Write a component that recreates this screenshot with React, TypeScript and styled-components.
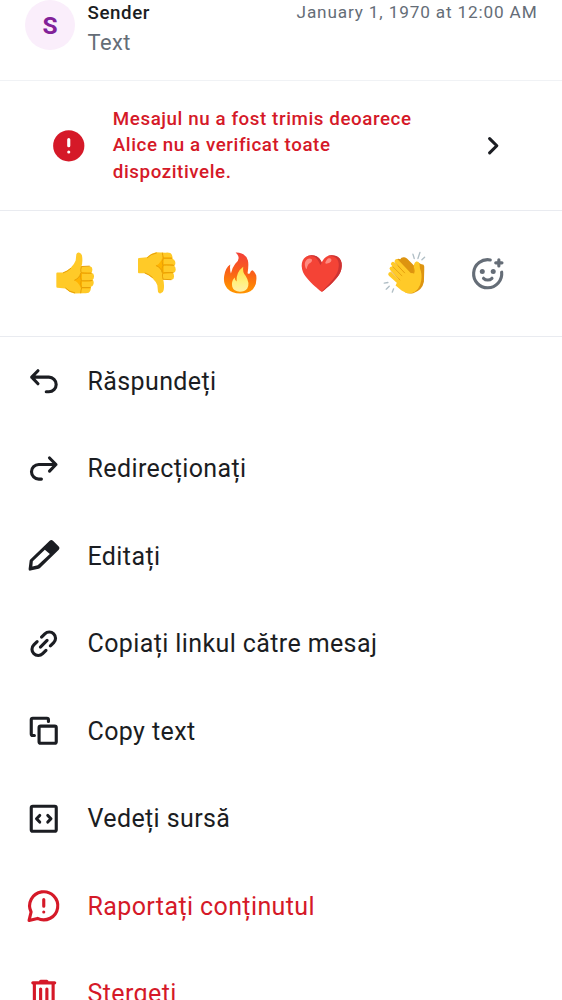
import React from "react";
import styled, { createGlobalStyle } from "styled-components";

const Global = createGlobalStyle`
  *, *::before, *::after { box-sizing: border-box; }
  html, body { margin: 0; padding: 0; background: #fff; }
  body { height: 1000px; overflow: hidden; font-family: Roboto, "Noto Sans", sans-serif; color: #1b1d22; }
`;

const Sheet = styled.main`
  display: flex;
  flex-direction: column;
  width: 562px;
  height: 1000px;
  overflow: hidden;
  background: #fff;
`;

const Header = styled.header`
  display: flex;
  flex: none;
  height: 81px;
  padding: 0 24.5px 0 25px;
  border-bottom: 1.5px solid #f0f2f5;
`;

const Avatar = styled.div`
  flex: none;
  width: 50px;
  height: 50px;
  border-radius: 50%;
  background: #faeefb;
  color: #822198;
  font-size: 24.5px;
  font-weight: 700;
  line-height: 51px;
  text-align: center;
`;

const Summary = styled.div`
  flex: 1;
  padding-left: 12.5px;
`;

const Sender = styled.div`
  font-size: 18.75px;
  font-weight: 500;
  line-height: 26px;
  letter-spacing: 0.57px;
`;

const Preview = styled.div`
  margin-top: 1px;
  font-size: 21.9px;
  line-height: 31px;
  letter-spacing: 0.39px;
  color: #656d77;
`;

const Timestamp = styled.time`
  font-size: 17.2px;
  line-height: 24px;
  letter-spacing: 0.84px;
  color: #656d77;
`;

const Warning = styled.section`
  display: flex;
  flex: none;
  align-items: center;
  height: 130px;
  padding: 0 51px 0 50px;
  border-bottom: 1.5px solid #e9ebf0;
  color: #d51928;
`;

const WarningText = styled.p`
  flex: 1;
  margin: 0.5px 0 0 25.3px;
  font-size: 18.75px;
  font-weight: 500;
  line-height: 26.6px;
  letter-spacing: 0.58px;
`;

const Reactions = styled.section`
  display: grid;
  flex: none;
  grid-template-columns: repeat(6, 82.5px);
  justify-content: center;
  align-items: center;
  height: 126px;
  border-bottom: 1.5px solid #e9ebf0;
  color: #656d77;
`;

const Emoji = styled.span`
  font-family: "Noto Color Emoji", sans-serif;
  font-size: 36.5px;
  line-height: 44px;
  text-align: center;
`;

const Reaction = styled.span`
  display: flex;
  justify-content: center;
`;

const EmojiDrawing = styled.svg`
  display: block;
  width: 42px;
  height: 42px;
  margin-bottom: 1.5px;
  overflow: visible;
`;

const Actions = styled.ul`
  margin: 0;
  padding: 0;
  list-style: none;
`;

const Action = styled.li<{ $critical?: boolean }>`
  display: flex;
  align-items: center;
  gap: 25px;
  height: 87.5px;
  padding: 0 25px;
  font-size: 25px;
  letter-spacing: 0.39px;
  color: ${(p) => (p.$critical ? "#d51928" : "#1b1d22")};
`;

const Label = styled.span`
  padding-top: 1px;
`;

const Glyph = styled.svg`
  display: block;
  flex: none;
  width: 37.5px;
  height: 37.5px;
  fill: currentColor;
`;

const line = {
  fill: "none",
  stroke: "currentColor",
  strokeWidth: 2,
  strokeLinecap: "round" as const,
  strokeLinejoin: "round" as const,
};

const icons: Record<string, React.ReactNode> = {
  reply: <path {...line} d="M8.3 5.6 4.3 9.7l4 4.2M4.3 9.7h11a4.65 4.65 0 0 1 0 9.3h-1.7" />,
  forward: <path {...line} d="M15.7 5.1 19.8 9.3l-4.1 4.2M19.8 9.3h-11a4.65 4.65 0 0 0 0 9.3h1.7" />,
  edit: (
    <path
      fillRule="evenodd"
      d="M3.2 14.5 15.8 2.4q1.1-.9 2.1 0l3.7 3.7q1 1 0 2L9.6 19.8q-.4.4-.9.5l-5.2 1.2q-1.3.2-1.2-1L3 15.1q0-.3.2-.6M12.7 8.1l-7.7 7.4-.3 3.4 3.4-.8 7.8-7.3z"
    />
  ),
  link: (
    <path d="M12 19.071a4.9 4.9 0 0 1-3.536 1.467 4.9 4.9 0 0 1-3.535-1.467 4.9 4.9 0 0 1-1.467-3.535q0-2.067 1.467-3.536L7.05 9.879q.3-.3.707-.3t.707.3.301.707-.3.707l-2.122 2.121a2.9 2.9 0 0 0-.884 2.122q0 1.237.884 2.12.884.885 2.121.885t2.122-.884l2.121-2.121q.3-.3.707-.3t.707.3.3.707-.3.707zm-1.414-4.243q-.3.3-.707.3t-.707-.3-.301-.707.3-.707l4.243-4.242q.3-.3.707-.3t.707.3.3.707-.3.707zm6.364-.707q-.3.3-.707.3t-.707-.3-.301-.707.3-.707l2.122-2.121q.884-.885.884-2.121 0-1.238-.884-2.122a2.9 2.9 0 0 0-2.121-.884q-1.237 0-2.122.884l-2.121 2.122q-.3.3-.707.3t-.707-.3-.3-.707.3-.708L12 4.93q1.467-1.467 3.536-1.467t3.535 1.467 1.467 3.535T19.071 12z" />
  ),
  copy: (
    <g {...line}>
      <rect x="9" y="9" width="11" height="11" rx="1" />
      <path d="M15 6V5q0-1-1-1H5Q4 4 4 5v9q0 1 1 1h1" />
    </g>
  ),
  source: (
    <g {...line}>
      <rect x="4" y="4" width="16" height="16" rx="1" />
      <path d="M9.4 9.9 7.4 12l2 2.1M14.6 9.9l2 2.1-2 2.1" />
    </g>
  ),
  report: (
    <g {...line}>
      <path d="M8 20.1A9 9 0 1 0 3.9 16L2.6 21.4z" />
      <path d="M12 8v4.3M12 16v.01" />
    </g>
  ),
  remove: (
    <path d="M7 21q-.824 0-1.412-.587A1.93 1.93 0 0 1 5 19V6a.97.97 0 0 1-.713-.287A.97.97 0 0 1 4 5q0-.424.287-.713A.97.97 0 0 1 5 4h4q0-.424.287-.712A.97.97 0 0 1 10 3h4q.424 0 .713.288Q15 3.575 15 4h4q.424 0 .712.287Q20 4.576 20 5t-.288.713A.97.97 0 0 1 19 6v13q0 .824-.587 1.413A1.93 1.93 0 0 1 17 21zM7 6v13h10V6zm2 10q0 .424.287.712Q9.576 17 10 17t.713-.288A.97.97 0 0 0 11 16V9a.97.97 0 0 0-.287-.713A.97.97 0 0 0 10 8a.97.97 0 0 0-.713.287A.97.97 0 0 0 9 9zm4 0q0 .424.287.712.288.288.713.288.424 0 .713-.288A.97.97 0 0 0 15 16V9a.97.97 0 0 0-.287-.713A.97.97 0 0 0 14 8a.97.97 0 0 0-.713.287A.97.97 0 0 0 13 9z" />
  ),
  error: (
    <>
      <circle cx="12" cy="12" r="10" />
      <path {...line} stroke="#fff" d="M12 8v4M12 16v.01" />
    </>
  ),
  chevron: <path {...line} stroke="#1b1d22" d="m10 7.4 4.6 4.6-4.6 4.6" />,
  addReaction: (
    <>
      <path {...line} d="M13.6 3.15A9 9 0 1 0 20.9 11" />
      <path {...line} d="M19.1 3v4M17.1 5h4M9.3 14.9q1.1 1.1 2.7 1.1t2.7-1.1" />
      <circle cx="8.5" cy="10.5" r="1.6" />
      <circle cx="15.5" cy="10.5" r="1.6" />
    </>
  ),
};

const Icon = ({ name }: { name: string }) => (
  <Glyph viewBox="0 0 24 24" aria-hidden="true">
    {icons[name]}
  </Glyph>
);

const Thumb = ({ down }: { down?: boolean }) => (
  <EmojiDrawing viewBox="101 142.5 126 126" role="img">
    <g transform={down ? "translate(-1 410.5) scale(1 -1)" : undefined}>
      <path
        fill="#ffca28"
        d="M108 207q0-3 3-3h17q12-5 22-13 12-11 16-23l2-19q2-6 8-5 8 2 9 10 3 18-2 33l26-2q8 1 7 11 0 6-3 9 9 2 8 11 0 7-4 10 5 6 2 14-2 6-7 7 0 13-7 18-5 2-15 1l-28 1q-17-4-27-15l-24-2q-3 0-3-4z"
      />
      <path fill="#ffb300" d="M162 227q15-8 21-24l30 2-3 3h-25v20h30l-3 3h-27v18h27l-4 3h-24l1 14q-4-30-23-39" />
      <path
        fill="none"
        stroke="#e8a008"
        strokeWidth="3"
        strokeLinecap="round"
        d="M183 187q-3 9-1 17 4 3 31 2M163 227q15-6 18-21-2 16 2 22 5 2 32 0M182 229q-4 12 2 20h25M184 250q-3 8-3 15M136 251q9 11 27 14M184 186l23-1M129 205q12-4 22-13"
      />
    </g>
  </EmojiDrawing>
);

const Fire = () => (
  <EmojiDrawing viewBox="596.25 142.5 126 126" role="img">
    <defs>
      <linearGradient id="flame" x1="0.55" y1="0" x2="0.45" y2="1">
        <stop offset="0.05" stopColor="#f44336" />
        <stop offset="0.5" stopColor="#fa6217" />
        <stop offset="0.9" stopColor="#ff9100" />
      </linearGradient>
      <linearGradient id="core" x1="0" y1="0" x2="0" y2="1">
        <stop offset="0.1" stopColor="#ffe14d" />
        <stop offset="0.6" stopColor="#fff17e" />
        <stop offset="1" stopColor="#fff0a8" />
      </linearGradient>
    </defs>
    <path
      fill="url(#flame)"
      d="M646 144q29-1 37 24 3 12-1 38 6 5 8-2 1-6 7-7 6 4 11 16 3 27-10 41-14 13-38 13-25 0-39-15-13-15-9-39 4-24 18-33-2 15 2 27 3-16 13-29 20-17 1-34"
    />
    <path
      fill="url(#core)"
      d="M669 187q-3 16 7 27 14 22 5 38-8 10-22 10-19-1-23-15-4-15 7-28 2 11 6 12-2-28 20-44"
    />
  </EmojiDrawing>
);

const Clap = () => (
  <EmojiDrawing viewBox="41.25 37.5 126 126" role="img">
    <path
      fill="#dd9410"
      d="M78 62q5-7 12-3 3-7 12-6 5 0 9 5l20 20 14-8q6 5 15 6 3 4 2 13l-1 38q-5 26-32 34-15 3-24-3z"
    />
    <g fill="none" stroke="#ffca28" strokeWidth="12" strokeLinecap="round">
      <path d="m79 65 38 40M68 73l42 43M64 87l40 40M60 104l42 38" />
    </g>
    <path
      fill="#ffca28"
      d="m107 100 24 1q3-4 0-14-2-17 7-21 9-1 10 9l1 12q7 15 4 36-5 32-30 38-15 2-29-8l-18-15 14-30z"
    />
    <g fill="none" stroke="#e59c0c" strokeWidth="2.5" strokeLinecap="round">
      <path d="m75 70 28 30M67 81l28 28M62 96l27 25M131 101q2-6 0-14" />
    </g>
    <g fill="none" stroke="#b0bec5" strokeWidth="4" strokeLinecap="round">
      <path d="m128 44 4 13M149 39l-6 18M163 53l-8 8M42 131l11-2M48 149l9-9M70 148l-4 10" />
    </g>
  </EmojiDrawing>
);

const actions = [
  { icon: "reply", label: "Răspundeți" },
  { icon: "forward", label: "Redirecționați" },
  { icon: "edit", label: "Editați" },
  { icon: "link", label: "Copiați linkul către mesaj" },
  { icon: "copy", label: "Copy text" },
  { icon: "source", label: "Vedeți sursă" },
  { icon: "report", label: "Raportați conținutul", critical: true },
  { icon: "remove", label: "Ștergeți", critical: true },
];

export default function App() {
  return (
    <>
      <Global />
      <Sheet>
        <Header>
          <Avatar>S</Avatar>
          <Summary>
            <Sender>Sender</Sender>
            <Preview>Text</Preview>
          </Summary>
          <Timestamp>January 1, 1970 at 12:00 AM</Timestamp>
        </Header>
        <Warning>
          <Icon name="error" />
          <WarningText>
            Mesajul nu a fost trimis deoarece
            <br />
            Alice nu a verificat toate
            <br />
            dispozitivele.
          </WarningText>
          <Icon name="chevron" />
        </Warning>
        <Reactions>
          <Reaction>
            <Thumb />
          </Reaction>
          <Reaction>
            <Thumb down />
          </Reaction>
          <Reaction>
            <Fire />
          </Reaction>
          <Emoji>❤️</Emoji>
          <Reaction>
            <Clap />
          </Reaction>
          <Reaction>
            <Icon name="addReaction" />
          </Reaction>
        </Reactions>
        <Actions>
          {actions.map((a) => (
            <Action key={a.label} $critical={a.critical}>
              <Icon name={a.icon} />
              <Label>{a.label}</Label>
            </Action>
          ))}
        </Actions>
      </Sheet>
    </>
  );
}
